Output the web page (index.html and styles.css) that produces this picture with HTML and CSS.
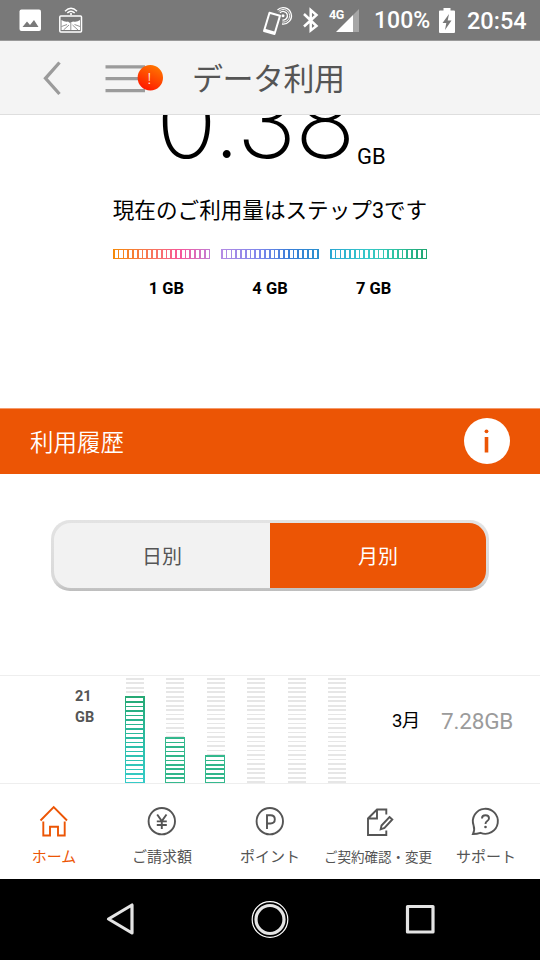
FILE: index.html
```html
<!DOCTYPE html>
<html lang="ja">
<head>
<meta charset="utf-8">
<title>データ利用</title>
<link rel="stylesheet" href="styles.css">
</head>
<body>
<div class="status">
  <svg class="status-left" width="90" height="40" viewBox="0 0 90 40">
    <rect x="19.500" y="9.500" width="21.500" height="21.500" rx="2" fill="#fff"/>
    <path d="M22.500 27 L27 21.500 L30 25 L34 20 L38.500 27Z" fill="#797979"/>
    <rect x="59.800" y="16" width="21.700" height="16" rx="1" fill="none" stroke="#fff" stroke-width="1.500"/>
    <path d="M61.500 20 Q65 22.500 68 21.500 L70 23 L73 21.500 Q77 22.500 80 20 V30 H61.500Z" fill="#fff"/>
    <path d="M70.800 23 V30 M69 25 L63.500 30 M72.500 25 L78 30 M67 24.500 L61.500 26.500 M74.500 24.500 L80 26.500" stroke="#797979" stroke-width=".8"/>
    <path d="M65 11.200 Q71 5.500 77 11.200 M67.300 13 Q71 9.500 74.700 13" fill="none" stroke="#fff" stroke-width="1.400"/>
    <circle cx="71" cy="14" r="1.100" fill="#fff"/>
  </svg>
  <svg class="status-right" width="110" height="40" viewBox="255 0 110 40">
    <path d="M269.500 12.800 L280 15.800 L274.500 34 L264 31Z" fill="none" stroke="#fff" stroke-width="2" stroke-linejoin="round"/>
    <path d="M264 31 L274.500 34 L275.300 31.800 L265 28.800Z" fill="#fff"/>
    <circle cx="283" cy="15.800" r="1.500" fill="#fff"/>
    <path d="M280 12.800 A4.300 4.300 0 1 1 282.500 20 M277.500 10 A8.200 8.200 0 1 1 282 24" fill="none" stroke="#fff" stroke-width="1.300"/>
    <path d="M278.700 11.500 A6.300 6.300 0 1 1 282.300 22" fill="none" stroke="#fff" stroke-width=".9"/>
    <path d="M304 14 L316.500 26 L310.700 30.500 V10 L316.500 15 L304 26.500" fill="none" stroke="#fff" stroke-width="2.500"/>
    <path d="M336 32 L353 15 V32Z" fill="#fff"/>
    <path d="M353 15 L359 9 V32 H353Z" fill="#a6a6a6"/>
    <text class="net" x="329" y="19.200">4G</text>
  </svg>
  <span class="pct">100%</span>
  <svg class="battery" width="16" height="25" viewBox="0 0 16 25">
    <path d="M0 3.500 Q0 2.500 1 2.500 H4.500 V0 H11.500 V2.500 H15 Q16 2.500 16 3.500 V24 Q16 25 15 25 H1 Q0 25 0 24Z" fill="#fff"/>
    <path d="M10 6 L3.500 15 H7.300 L6 22 L12.500 12.500 H8.700Z" fill="#797979"/>
  </svg>
  <span class="clock">20:54</span>
</div>
<header class="header">
  <svg class="header-icons" width="170" height="72" viewBox="0 41 170 72">
    <path d="M59.500 62.500 L45.500 78.300 L59.500 94" fill="none" stroke="#9b9b9b" stroke-width="3.300"/>
    <path d="M105.500 66.800 H145 M105.500 78.700 H145 M105.500 90.600 H145" stroke="#9b9b9b" stroke-width="3.200"/>
    <defs><linearGradient id="alert" x1=".8" y1="0" x2=".3" y2="1"><stop offset="0" stop-color="#ff7a00"/><stop offset="1" stop-color="#ff1600"/></linearGradient></defs>
    <circle cx="150.300" cy="77.800" r="12.700" fill="url(#alert)"/>
    <text class="bang" x="149.300" y="84" text-anchor="middle">!</text>
  </svg>
  <h1 class="title">データ利用</h1>
</header>
<main>
  <section class="usage">
    <div class="amount"><span class="number">0.38</span><span class="unit">GB</span></div>
    <p class="step">現在のご利用量はステップ3です</p>
    <div class="meters"><i class="ticks warm"></i><i class="ticks violet"></i><i class="ticks teal"></i></div>
    <div class="limits"><b>1 GB</b><b>4 GB</b><b>7 GB</b></div>
  </section>
  <section class="band"><h2>利用履歴</h2>
    <svg width="46" height="46" viewBox="0 0 46 46"><circle cx="23" cy="23" r="23" fill="#fff"/><circle cx="22.500" cy="13.300" r="1.900" fill="#ec5505"/><path d="M22.500 19 V34.500" stroke="#ec5505" stroke-width="3.600"/></svg>
  </section>
  <div class="tabs"><span class="tab">日別</span><span class="tab active">月別</span></div>
  <section class="history">
    <div class="scale">21<br>GB</div>
    <div class="bars">
      <div class="bar"><i class="fill tall"></i></div>
      <div class="bar"><i class="fill mid"></i></div>
      <div class="bar"><i class="fill low"></i></div>
      <div class="bar"></div>
      <div class="bar"></div>
      <div class="bar"></div>
    </div>
    <span class="month">3月</span><span class="value">7.28GB</span>
  </section>
</main>
<nav class="nav">
  <a class="item current"><svg width="32" height="36" viewBox="38 803 32 36"><path d="M40.500 820.500 L53.700 807 L67 820.500 M43.300 821.500 V835.500 H50 V826.800 H58 V835.500 H64.700 V821.500"/></svg><span>ホーム</span></a>
  <a class="item"><svg width="32" height="36" viewBox="146 803 32 36"><circle cx="161.800" cy="821.200" r="13.200"/><path d="M157.200 814.500 L161.800 821 L166.500 814.500 M161.800 821 V829 M156.800 821.400 H166.800 M156.800 825 H166.800"/></svg><span>ご請求額</span></a>
  <a class="item"><svg width="32" height="36" viewBox="254 803 32 36"><circle cx="269.800" cy="821.200" r="13.200"/><path d="M267 829 V815.300 H270.500 Q274.800 815.300 274.800 819.300 Q274.800 823.500 270.500 823.500 H267"/></svg><span>ポイント</span></a>
  <a class="item small"><svg width="32" height="36" viewBox="362 803 32 36"><path d="M386.300 814.500 V809.500 H377 L368 818.500 V835 H386.300 V830.500 M377 809.500 V818.500 H368 M389.500 817 L392.300 819.500 L384.500 828 L380.700 829.300 L381.500 825.500Z"/></svg><span>ご契約確認・変更</span></a>
  <a class="item"><svg width="32" height="36" viewBox="470 803 32 36"><path d="M473 834 Q475 830 473.600 825.500 A12.500 12.500 0 1 1 480.500 832.800 Q477 834 473 834Z M482 818.500 Q482 815.300 485.500 815.300 Q489 815.300 489 818.300 Q489 820 487 821.300 Q485.500 822.300 485.500 824"/><circle class="dot" cx="485.500" cy="827" r="1.300"/></svg><span>サポート</span></a>
</nav>
<footer class="system">
  <svg width="540" height="81" viewBox="0 879 540 81" fill="none" stroke="#e4e4e4" stroke-width="3.200" stroke-linejoin="round">
    <path d="M132 905 V933 L108.500 919Z"/>
    <circle cx="270" cy="919.500" r="14"/><circle cx="270" cy="919.500" r="17.800" stroke="#fff" stroke-width="1.200"/>
    <rect x="407.500" y="906.500" width="25.500" height="25.500"/>
  </svg>
</footer>
</body>
</html>
```
FILE: styles.css
```css
* { box-sizing: border-box; }
body { margin: 0; width: 540px; height: 960px; overflow: hidden; display: flex; flex-direction: column; background: #fff; color: #000; font-family: Roboto, "Noto Sans CJK JP", sans-serif; }
svg { display: block; flex: none; }
h1, h2, p { margin: 0; font-weight: 400; }
.status { flex: none; height: 41px; background: #797979; border-bottom: 1px solid #999; display: flex; color: #fff; font-size: 23px; line-height: 42px; white-space: nowrap; }
.status-right { margin-left: 165px; }
.net { font: 700 12.500px Roboto, sans-serif; letter-spacing: -.5px; fill: #fff; }
.pct { margin-left: 9px; width: 57px; font-weight: 500; font-size: 23px; }
.battery { margin: 8px 0 0 8px; }
.clock { margin-left: 12px; font-weight: 500; font-size: 23.500px; }
.header { flex: none; height: 74px; background: #f4f4f4; border-bottom: 1px solid #dedede; display: flex; }
.title { margin-left: 22px; font-size: 31px; line-height: 77px; height: 72px; letter-spacing: -.5px; color: #555; }
.bang { font: 300 15px "Noto Sans", sans-serif; fill: #fff; }
main { flex: none; height: 669px; overflow: hidden; }
.usage { height: 293px; overflow: hidden; text-align: center; }
.amount { height: 52px; display: flex; align-items: flex-end; padding-left: 156px; }
.number { font-family: Inter, Roboto, sans-serif; font-weight: 200; font-size: 101px; line-height: 80px; height: 86px; width: 201px; letter-spacing: -1.600px; text-align: left; white-space: nowrap; }
.unit { font-size: 22px; line-height: 26px; height: 26px; margin-bottom: -3px; }
.step { margin-top: 26px; font-size: 21.600px; line-height: 35px; height: 34px; white-space: nowrap; }
.meters { display: flex; gap: 11px; margin: 22px 113px 0; }
.ticks { flex: 1; height: 10px; background: repeating-linear-gradient(90deg, transparent 0 1.700px, #fff 1.700px 4.780px) 0 1px / 100% 8px no-repeat, var(--tint); border-right: 1px solid var(--end); }
.warm { --end: #c47bd2; --tint: linear-gradient(90deg, #f58a08, #f8716b 48%, #f7569a 70%, #c47bd2); }
.violet { --end: #2b90cf; --tint: linear-gradient(90deg, #b58be4, #7d86ec 40%, #3a7ed8 70%, #2b90cf); }
.teal { --end: #20a571; --tint: linear-gradient(90deg, #2ba7d2, #36c9c9 40%, #2fc2a0 70%, #20a571); }
.limits { display: flex; margin: 18px 114.500px 0; font-size: 16.500px; line-height: 24px; }
.limits b { flex: 1; }
.band { height: 66px; background: #ec5505; border-top: 1px solid #f49a6b; color: #fff; display: flex; justify-content: space-between; align-items: center; padding: 0 30px 1px; }
.band h2 { font-size: 23.500px; font-weight: 350; }
.tabs { display: flex; width: 438px; height: 71px; margin: 46px 51px 0; padding: 3px; border-radius: 19px; background: linear-gradient(#e3e3e3, #d9d9d9 85%, #bdbdbd); }
.tab { flex: 1; display: flex; align-items: center; justify-content: center; background: #f2f2f2; color: #555; font-size: 20px; border-radius: 17px 0 0 17px; }
.active { background: #ec5505; color: #fff; border-radius: 0 17px 17px 0; }
.history { height: 109px; margin-top: 84px; border-top: 1px solid #eee; border-bottom: 1px solid #eee; display: flex; }
.scale { width: 50px; margin: 11px 0 0 75px; font: 700 14.500px/20.500px Roboto, sans-serif; color: #555; }
.bars { display: flex; gap: 20.300px; margin-left: -.500px; }
.bar { width: 20.200px; display: flex; align-items: flex-end; background: repeating-linear-gradient(0deg, #e6e6e6 0 1.700px, #fff 1.700px 4.500px) center / 18px 100% no-repeat; }
.fill { width: 20px; border: solid #35b98e; border-width: 1px 1.500px; background: repeating-linear-gradient(0deg, transparent 0 2.800px, #30b68a 2.800px 4.500px), #fff; }
.tall { height: 87px; border: 0; background: repeating-linear-gradient(0deg, #fff 0 2.800px, transparent 2.800px 4.500px) 50% 1px / 17px 85px no-repeat, linear-gradient(#25a873, #2dc0ac 60%, #36cbc8); }
.mid { height: 46px; }
.low { height: 28px; }
.month { margin-left: 45px; width: 49px; font-size: 18.500px; line-height: 90px; letter-spacing: -.7px; }
.value { font-size: 22.500px; line-height: 90px; color: #9b9b9b; letter-spacing: -.2px; }
.nav { flex: none; height: 95px; display: flex; color: #555; }
.item { width: 108px; display: flex; flex-direction: column; align-items: center; padding-top: 19px; font-size: 15px; white-space: nowrap; }
.item svg { fill: none; stroke: currentColor; stroke-width: 1.900; }
.item .dot { fill: currentColor; stroke: none; }
.item span { line-height: 24px; margin-top: 6px; }
.current { color: #ec5505; }
.small { font-size: 13.500px; }
.system { flex: none; height: 81px; background: #000; }
```
